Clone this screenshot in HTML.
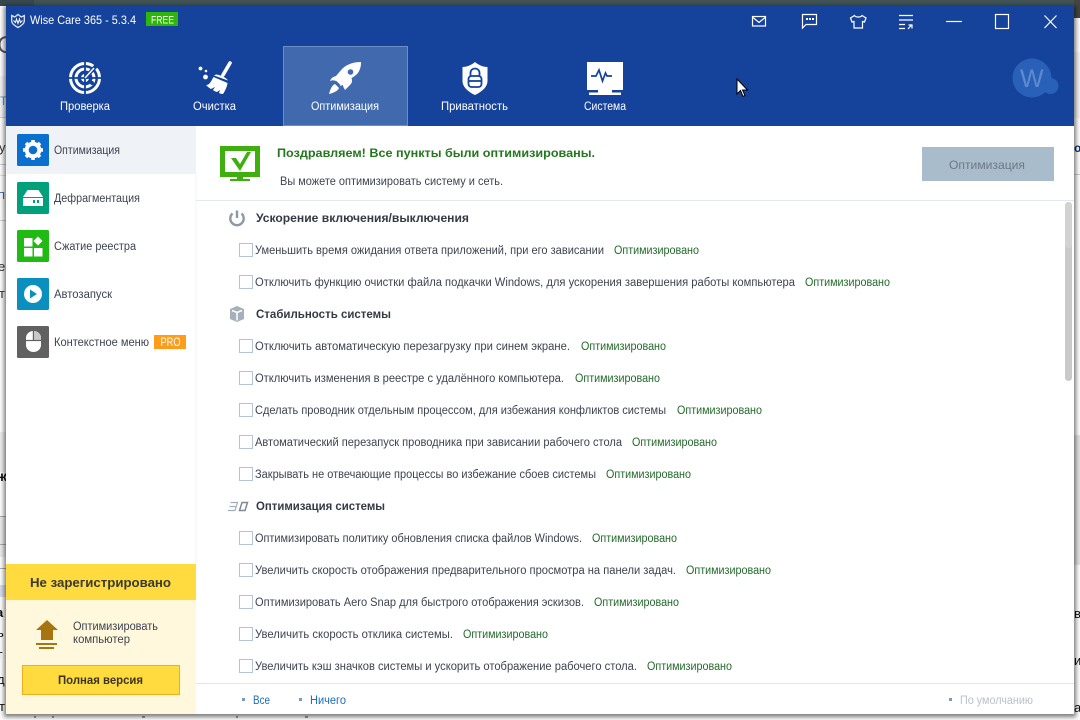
<!DOCTYPE html>
<html><head><meta charset="utf-8"><title>Wise Care 365</title>
<style>
html,body{margin:0;padding:0;background:#f4f4f4;width:1080px;height:720px;overflow:hidden}
svg{display:block;position:absolute;left:0;top:0}
text{font-family:"Liberation Sans","DejaVu Sans",sans-serif;font-size:11.5px;fill:#3c4350}
.b{font-weight:bold}
.w{fill:#fff}
.s{fill:#226a2a}
.f{fill:#1a6cc0}
</style></head><body>
<svg width="1080" height="720" viewBox="0 0 1080 720" xmlns="http://www.w3.org/2000/svg">
<defs><filter id="sh" x="-3%" y="-3%" width="106%" height="106%"><feGaussianBlur stdDeviation="2"/></filter></defs>
<!-- background page -->
<rect width="1080" height="720" fill="#fbfbfb"/>
<rect width="1080" height="6" fill="#3f5254"/>
<rect x="0" y="0" width="34" height="6" fill="#37474f"/>
<rect x="0" y="76" width="6" height="42" fill="#f0f0f0"/>
<rect x="0" y="517" width="6" height="40" fill="#eaeaea"/>
<rect x="0" y="432" width="6" height="40" fill="#ececec"/>
<rect x="0" y="585" width="6" height="12" fill="#d5dbe8"/>
<rect x="0" y="117" width="6" height="1" fill="#ccc"/><rect x="0" y="164" width="6" height="1" fill="#ccc"/><rect x="0" y="175" width="6" height="1" fill="#ddd"/><rect x="0" y="220" width="6" height="1" fill="#ccc"/><rect x="0" y="516" width="6" height="1" fill="#aaa"/><rect x="0" y="544" width="6" height="1" fill="#aaa"/><rect x="0" y="568" width="6" height="1" fill="#aaa"/>
<rect x="1074" y="52" width="6" height="66" fill="#f1f1f1"/><rect x="1074" y="0" width="6" height="18" fill="#444"/>
<rect x="1074" y="435" width="6" height="130" fill="#e2e2e2"/><rect x="1074" y="174" width="6" height="1" fill="#ccc"/>
<text x="-3" y="53" style="font-size:24px;fill:#555">С</text>
<text x="0" y="105" style="fill:#5a8fc0">Т</text>
<text x="-1" y="152" style="fill:#333;font-size:13px">у</text>
<text x="-2" y="199" style="fill:#3a6ea5;font-size:13px">п</text>
<text x="-2" y="271" style="fill:#333;font-size:13px">е</text>
<text x="-1" y="298" style="fill:#333;font-size:13px">т</text>
<text x="-3" y="481" class="b" style="fill:#111;font-size:14px">ж</text>
<text x="-4" y="617" class="b" style="fill:#111;font-size:13px">а</text>
<text x="-3" y="637" style="fill:#111;font-size:13px">ь</text>
<text x="-2" y="659" style="fill:#111;font-size:13px">г</text>
<text x="-3" y="684" style="fill:#111;font-size:13px">д</text>
<text x="-1" y="711" style="fill:#111;font-size:13px">т</text>
<text x="1074" y="152" class="b" style="fill:#0d2a66;font-size:12px">о</text>
<text x="1074" y="618" style="fill:#111;font-size:13px">в</text>
<text x="1074" y="665" style="fill:#111;font-size:13px">и</text>
<text x="1074" y="712" style="fill:#111;font-size:13px">а</text>
<g fill="#555" opacity=".6"><rect x="34" y="716" width="2" height="2"/><rect x="52" y="716" width="2" height="2"/><rect x="142" y="716" width="3" height="2"/><rect x="236" y="716" width="2" height="2"/><rect x="305" y="716" width="3" height="2"/></g>
<!-- window shadow -->
<rect x="4" y="6" width="1072" height="711" fill="#000" opacity=".5" filter="url(#sh)"/>
<!-- window -->
<rect x="6" y="6" width="1068" height="708" fill="#fff"/>
<rect x="6" y="6" width="1068" height="120" fill="#15429b"/>
<rect x="283.500" y="46.500" width="124" height="79" fill="#4169ae" stroke="#6d8cc2"/>
<!-- titlebar -->
<path d="M11.700 15.500l3 1.500 3.300-2.500 3.300 2.500 3-1.500v5.500c0 3-3.500 5-6.300 6.500-2.800-1.500-6.300-3.500-6.300-6.500z" fill="none" stroke="#dfe8f5" stroke-width="1.300"/>
<path d="M13.500 20.500l2 2 1-3.500 1.500 4.500 1.500-4.500 1 3.500 2-2" fill="none" stroke="#fff" stroke-width="1"/>
<text x="30" y="24" class="w" style="font-size:12px" textLength="106" lengthAdjust="spacingAndGlyphs">Wise Care 365 - 5.3.4</text>
<rect x="146" y="12" width="32" height="14" fill="#2fb60a"/>
<text x="151" y="23.500" class="w" style="font-size:11px" textLength="23" lengthAdjust="spacingAndGlyphs">FREE</text>
<g fill="none" stroke="#fff" stroke-width="1.200">
<rect x="752.500" y="16.500" width="13" height="9.500"/><path d="M753 17.500l6 5 6-5"/>
<path d="M802.500 14.500h14v10h-10.500l-3.500 3.500z"/>
<path d="M854.500 15.500l-4 2.500 1.500 4 2-.5v6.500h8.500v-6.500l2 .5 1.500-4-4-2.500c-1 2-6.500 2-7.500 0z"/>
<path d="M899 15.500h14M899 20h14M899 24.500h6M899 28.500h6M908 29l3.500-4M908.500 25h3.500v3.500"/>
<path d="M946 21.500h16"/>
<rect x="995.500" y="14.500" width="13" height="14"/>
<path d="M1044.500 15.500l12 12.500M1056.500 15.500l-12 12.500"/>
</g>
<g fill="#fff"><rect x="806" y="18" width="2" height="2"/><rect x="809" y="18" width="2" height="2"/><rect x="812" y="18" width="2" height="2"/></g>
<!-- nav: radar -->
<g fill="none" stroke="#fff">
<circle cx="85" cy="78" r="14.500" stroke-width="3"/><circle cx="85" cy="78" r="9" stroke-width="3"/>
</g>
<circle cx="85" cy="78" r="4" fill="#fff"/>
<path d="M69 78h32M85 62v32" stroke="#15429b" stroke-width="1.800"/>
<path d="M85 78l11-12" stroke="#15429b" stroke-width="4"/><path d="M85 78l9-10" stroke="#fff" stroke-width="1.500"/>
<circle cx="92" cy="83" r="2" fill="#15429b"/>
<!-- broom -->
<circle cx="200.500" cy="68.500" r="1.900" fill="#fff"/><circle cx="206" cy="71" r="1.300" fill="#fff"/><circle cx="205.500" cy="77" r="2.400" fill="#fff"/>
<path d="M230 63l-7 12" stroke="#fff" stroke-width="3.600" stroke-linecap="round"/>
<path d="M216 74.500c3 0 10 2.500 12 6l-14-5zM213.500 77l14 6c-.5 4-2.500 8-4.500 11-1.500 0-3-.5-4-1l1-3-3 2c-1.500-.5-3-1-4-2l2-3-4 2c-2-1-4-3-5-4 4 0 5-4 7.500-8z" fill="#fff"/>
<!-- rocket -->
<path d="M361 62c-7 0-14 2-19 7l-6 7c-3 1-5 2-6 5 2-1 4-1 6 0 1 1 3 3 4 5l3-1c0 2 1 3 2 5l5-5c3-3 2-5 1.500-7 4-2 7-5 8-8 1.500-3 1.500-6 1.500-8z" fill="#fff"/>
<circle cx="350.500" cy="72" r="2.800" fill="#4169ae"/>
<path d="M335 84c-3 1-5 6-6 10 4-1 9-3 10-6z" fill="#fff"/>
<path d="M340 85.500l-4-4" stroke="#4169ae" stroke-width="1.300"/>
<!-- shield -->
<path d="M475 62c-3.500 3-8 5-12.500 5v14c0 7 8 12 12.500 14 4.500-2 12.500-7 12.500-14v-14c-4.500 0-9-2-12.500-5z" fill="#fff"/>
<g fill="none" stroke="#15429b" stroke-width="1.800"><path d="M470.500 76v-3c0-6 9-6 9 0v3"/><rect x="468.500" y="76" width="13" height="11" rx="3"/><path d="M468.500 81h13"/></g>
<!-- monitor -->
<rect x="587" y="62" width="36" height="28" fill="#fff"/>
<path d="M591 76h5l3-6 3.500 11 3-8 1.500 3h5" fill="none" stroke="#15429b" stroke-width="1.700"/>
<rect x="598" y="90" width="14" height="3" fill="#fff"/><rect x="589" y="92.500" width="32" height="2.500" fill="#fff"/>
<!-- avatar -->
<circle cx="1032" cy="78" r="19.500" fill="#2a61b8"/><circle cx="1050.500" cy="86" r="8" fill="#2a61b8"/>
<text x="1020" y="87" style="font-size:25px;fill:#5f8ace">W</text>
<!-- nav labels -->
<text x="60" y="110" class="w" textLength="50" lengthAdjust="spacingAndGlyphs">Проверка</text>
<text x="193" y="110" class="w" textLength="43" lengthAdjust="spacingAndGlyphs">Очистка</text>
<text x="311" y="110" class="w" textLength="68" lengthAdjust="spacingAndGlyphs">Оптимизация</text>
<text x="441" y="110" class="w" textLength="67" lengthAdjust="spacingAndGlyphs">Приватность</text>
<text x="584" y="110" class="w" textLength="42" lengthAdjust="spacingAndGlyphs">Система</text>
<!-- cursor -->
<path d="M737 79v15l3.500-3.500 2.500 6 2-1-2.500-5.500h5z" fill="#fff" stroke="#000" stroke-width="1"/>
<!-- sidebar -->
<rect x="6" y="126" width="190" height="48" fill="#eff2f7"/>
<rect x="195.500" y="174" width="1" height="390" fill="#f2f3f6"/>
<rect x="17" y="134" width="32" height="32" rx="1.500" fill="#0b6fcf"/>
<rect x="17" y="182" width="32" height="32" rx="1.500" fill="#00a07a"/>
<rect x="17" y="230" width="32" height="32" rx="1.500" fill="#1fbb12"/>
<rect x="17" y="278" width="32" height="32" rx="1.500" fill="#0a8fbe"/>
<rect x="17" y="326" width="32" height="32" rx="1.500" fill="#616161"/>
<!-- gear -->
<circle cx="33" cy="150" r="6.300" fill="none" stroke="#fff" stroke-width="4"/>
<g stroke="#fff" stroke-width="3.600"><path d="M33 140v4M33 156v4M23 150h4M39 150h4M26 143l2.500 2.500M37.500 154.500l2.500 2.500M40 143l-2.500 2.500M28.500 154.500l-2.500 2.500"/></g>
<!-- disk -->
<path d="M27.500 190h11l4.500 7h-20z" fill="#fff"/><rect x="23" y="198" width="20" height="8" fill="#fff"/>
<rect x="33" y="200" width="2" height="3" fill="#00a07a"/><rect x="37" y="200" width="2" height="3" fill="#00a07a"/>
<!-- blocks -->
<rect x="24" y="238" width="8.500" height="8.500" fill="#fff"/><rect x="24" y="248" width="8.500" height="8.500" fill="#fff"/><rect x="34" y="248" width="8.500" height="8.500" fill="#fff"/>
<path d="M38 236.500l4.500 4.500-4.500 4.500-4.500-4.500z" fill="#fff"/>
<!-- play -->
<circle cx="33" cy="294" r="9" fill="#fff"/><path d="M30 289.500l7 4.500-7 4.500z" fill="#0a8fbe"/>
<!-- mouse -->
<path d="M26 338a7.500 7 0 0 1 15 0v7a7.500 7 0 0 1-15 0z" fill="#fff"/>
<path d="M33.500 331v9" stroke="#616161" stroke-width="1.400"/><path d="M34.500 331.500c3 0 6.500 2.500 6.500 6.500v2h-6.500z" fill="#c9c9c9"/><path d="M26 340.500h15" stroke="#616161" stroke-width="1.200"/>
<text x="54" y="154" textLength="66" lengthAdjust="spacingAndGlyphs">Оптимизация</text>
<text x="54" y="202" textLength="86" lengthAdjust="spacingAndGlyphs">Дефрагментация</text>
<text x="54" y="250" textLength="82" lengthAdjust="spacingAndGlyphs">Сжатие реестра</text>
<text x="54" y="298" textLength="58" lengthAdjust="spacingAndGlyphs">Автозапуск</text>
<text x="54" y="346" textLength="95" lengthAdjust="spacingAndGlyphs">Контекстное меню</text>
<rect x="154" y="335" width="32" height="14" fill="#ff9c1a"/>
<text x="160.500" y="346" class="w" textLength="20" lengthAdjust="spacingAndGlyphs">PRO</text>
<!-- unregistered -->
<rect x="6" y="564" width="190" height="36" fill="#ffdb3f"/>
<rect x="6" y="600" width="190" height="114" fill="#fff8dc"/>
<text x="30" y="587" class="b" style="font-size:13px;fill:#3a3a32" textLength="141" lengthAdjust="spacingAndGlyphs">Не зарегистрировано</text>
<path d="M47 620l11 10h-5v10h-12v-10h-5z" fill="#a8740f"/><rect x="36" y="643" width="21" height="2" fill="#a8740f"/><rect x="39" y="647" width="15" height="2" fill="#a8740f"/>
<text x="73" y="630" textLength="85" lengthAdjust="spacingAndGlyphs">Оптимизировать</text>
<text x="73" y="643" textLength="57" lengthAdjust="spacingAndGlyphs">компьютер</text>
<rect x="22.500" y="665.500" width="157" height="29" fill="#ffdb3f" stroke="#f0ae1e"/>
<text x="58" y="684" class="b" style="fill:#3a3320" textLength="85" lengthAdjust="spacingAndGlyphs">Полная версия</text>
<!-- header -->
<rect x="220" y="146" width="40" height="31" fill="#3fae0f"/><rect x="225" y="151" width="30" height="21" fill="#fff"/>
<path d="M231 158h5l4 6 7-12h4l-11 19z" fill="#3fae0f"/>
<rect x="237" y="177" width="6" height="2" fill="#3fae0f"/><rect x="230" y="179" width="20" height="2" fill="#3fae0f"/>
<text x="277" y="157" class="b s" style="font-size:12px;fill:#25761f" textLength="318" lengthAdjust="spacingAndGlyphs">Поздравляем! Все пункты были оптимизированы.</text>
<text x="280" y="185" textLength="223" lengthAdjust="spacingAndGlyphs">Вы можете оптимизировать систему и сеть.</text>
<rect x="922" y="147" width="132" height="34" fill="#a9bccb"/>
<text x="949" y="169" style="font-size:12px;fill:#6d7883" textLength="76" lengthAdjust="spacingAndGlyphs">Оптимизация</text>
<rect x="196" y="200" width="878" height="1" fill="#e3e8f0"/>
<rect x="1065" y="202" width="7" height="179" rx="3.500" fill="#c9c9c9"/>
<rect x="1065" y="202" width="7" height="46" rx="3.500" fill="#d2d2d2"/>
<!-- section icons -->
<path d="M232.500 213.500a6.700 6.700 0 1 0 9 0" fill="none" stroke="#8e99a6" stroke-width="2.400"/><path d="M237 210.500v7.500" stroke="#8e99a6" stroke-width="2.400"/>
<path d="M230 309l7-3 7 3v10l-7 3-7-3z" fill="#a6b0ba"/><path d="M232 310.500l5 2 5-2M237 312.500v8" fill="none" stroke="#fff" stroke-width="1.500"/>
<path d="M228 510.500h7l2.500-8h-7M229.500 506.500h6" fill="none" stroke="#a4adb7" stroke-width="1.200"/><path d="M239.500 510.500l2.500-8h5.500l-2.500 8z" fill="none" stroke="#7f8a96" stroke-width="1.500"/>
<text x="256" y="222" class="b" style="fill:#333a45" textLength="213" lengthAdjust="spacingAndGlyphs">Ускорение включения/выключения</text>
<text x="256" y="318" class="b" style="fill:#333a45" textLength="135" lengthAdjust="spacingAndGlyphs">Стабильность системы</text>
<text x="256" y="510" class="b" style="fill:#333a45" textLength="129" lengthAdjust="spacingAndGlyphs">Оптимизация системы</text>
<!-- rows -->
<g fill="#fff" stroke="#b5c4d3" stroke-width="1">
<rect x="239.500" y="243.500" width="13" height="13"/><rect x="239.500" y="275.500" width="13" height="13"/>
<rect x="239.500" y="339.500" width="13" height="13"/><rect x="239.500" y="371.500" width="13" height="13"/><rect x="239.500" y="403.500" width="13" height="13"/><rect x="239.500" y="435.500" width="13" height="13"/><rect x="239.500" y="467.500" width="13" height="13"/>
<rect x="239.500" y="531.500" width="13" height="13"/><rect x="239.500" y="563.500" width="13" height="13"/><rect x="239.500" y="595.500" width="13" height="13"/><rect x="239.500" y="627.500" width="13" height="13"/><rect x="239.500" y="659.500" width="13" height="13"/>
</g>
<text x="255" y="254" textLength="349" lengthAdjust="spacingAndGlyphs">Уменьшить время ожидания ответа приложений, при его зависании</text>
<text x="614" y="254" class="s" textLength="85" lengthAdjust="spacingAndGlyphs">Оптимизировано</text>
<text x="255" y="286" textLength="540" lengthAdjust="spacingAndGlyphs">Отключить функцию очистки файла подкачки Windows, для ускорения завершения работы компьютера</text>
<text x="805" y="286" class="s" textLength="85" lengthAdjust="spacingAndGlyphs">Оптимизировано</text>
<text x="255" y="350" textLength="315" lengthAdjust="spacingAndGlyphs">Отключить автоматическую перезагрузку при синем экране.</text>
<text x="581" y="350" class="s" textLength="85" lengthAdjust="spacingAndGlyphs">Оптимизировано</text>
<text x="255" y="382" textLength="309" lengthAdjust="spacingAndGlyphs">Отключить изменения в реестре с удалённого компьютера.</text>
<text x="575" y="382" class="s" textLength="85" lengthAdjust="spacingAndGlyphs">Оптимизировано</text>
<text x="255" y="414" textLength="411" lengthAdjust="spacingAndGlyphs">Сделать проводник отдельным процессом, для избежания конфликтов системы</text>
<text x="677" y="414" class="s" textLength="85" lengthAdjust="spacingAndGlyphs">Оптимизировано</text>
<text x="255" y="446" textLength="367" lengthAdjust="spacingAndGlyphs">Автоматический перезапуск проводника при зависании рабочего стола</text>
<text x="632" y="446" class="s" textLength="85" lengthAdjust="spacingAndGlyphs">Оптимизировано</text>
<text x="255" y="478" textLength="341" lengthAdjust="spacingAndGlyphs">Закрывать не отвечающие процессы во избежание сбоев системы</text>
<text x="606" y="478" class="s" textLength="85" lengthAdjust="spacingAndGlyphs">Оптимизировано</text>
<text x="255" y="542" textLength="327" lengthAdjust="spacingAndGlyphs">Оптимизировать политику обновления списка файлов Windows.</text>
<text x="592" y="542" class="s" textLength="85" lengthAdjust="spacingAndGlyphs">Оптимизировано</text>
<text x="255" y="574" textLength="421" lengthAdjust="spacingAndGlyphs">Увеличить скорость отображения предварительного просмотра на панели задач.</text>
<text x="686" y="574" class="s" textLength="85" lengthAdjust="spacingAndGlyphs">Оптимизировано</text>
<text x="255" y="606" textLength="329" lengthAdjust="spacingAndGlyphs">Оптимизировать Aero Snap для быстрого отображения эскизов.</text>
<text x="594" y="606" class="s" textLength="85" lengthAdjust="spacingAndGlyphs">Оптимизировано</text>
<text x="255" y="638" textLength="198" lengthAdjust="spacingAndGlyphs">Увеличить скорость отклика системы.</text>
<text x="463" y="638" class="s" textLength="85" lengthAdjust="spacingAndGlyphs">Оптимизировано</text>
<text x="255" y="670" textLength="382" lengthAdjust="spacingAndGlyphs">Увеличить кэш значков системы и ускорить отображение рабочего стола.</text>
<text x="647" y="670" class="s" textLength="85" lengthAdjust="spacingAndGlyphs">Оптимизировано</text>
<!-- footer -->
<rect x="196" y="683" width="878" height="1" fill="#e3e6ee"/>
<rect x="242" y="698" width="3" height="3" fill="#7a9ab5"/><rect x="299" y="698" width="3" height="3" fill="#7a9ab5"/><rect x="949" y="698" width="3" height="3" fill="#7a9ab5"/>
<text x="253" y="704" class="f" textLength="17" lengthAdjust="spacingAndGlyphs">Все</text>
<text x="310" y="704" class="f" textLength="36" lengthAdjust="spacingAndGlyphs">Ничего</text>
<text x="960" y="704" style="fill:#bcc0c8" textLength="73" lengthAdjust="spacingAndGlyphs">По умолчанию</text>
</svg>
</body></html>
